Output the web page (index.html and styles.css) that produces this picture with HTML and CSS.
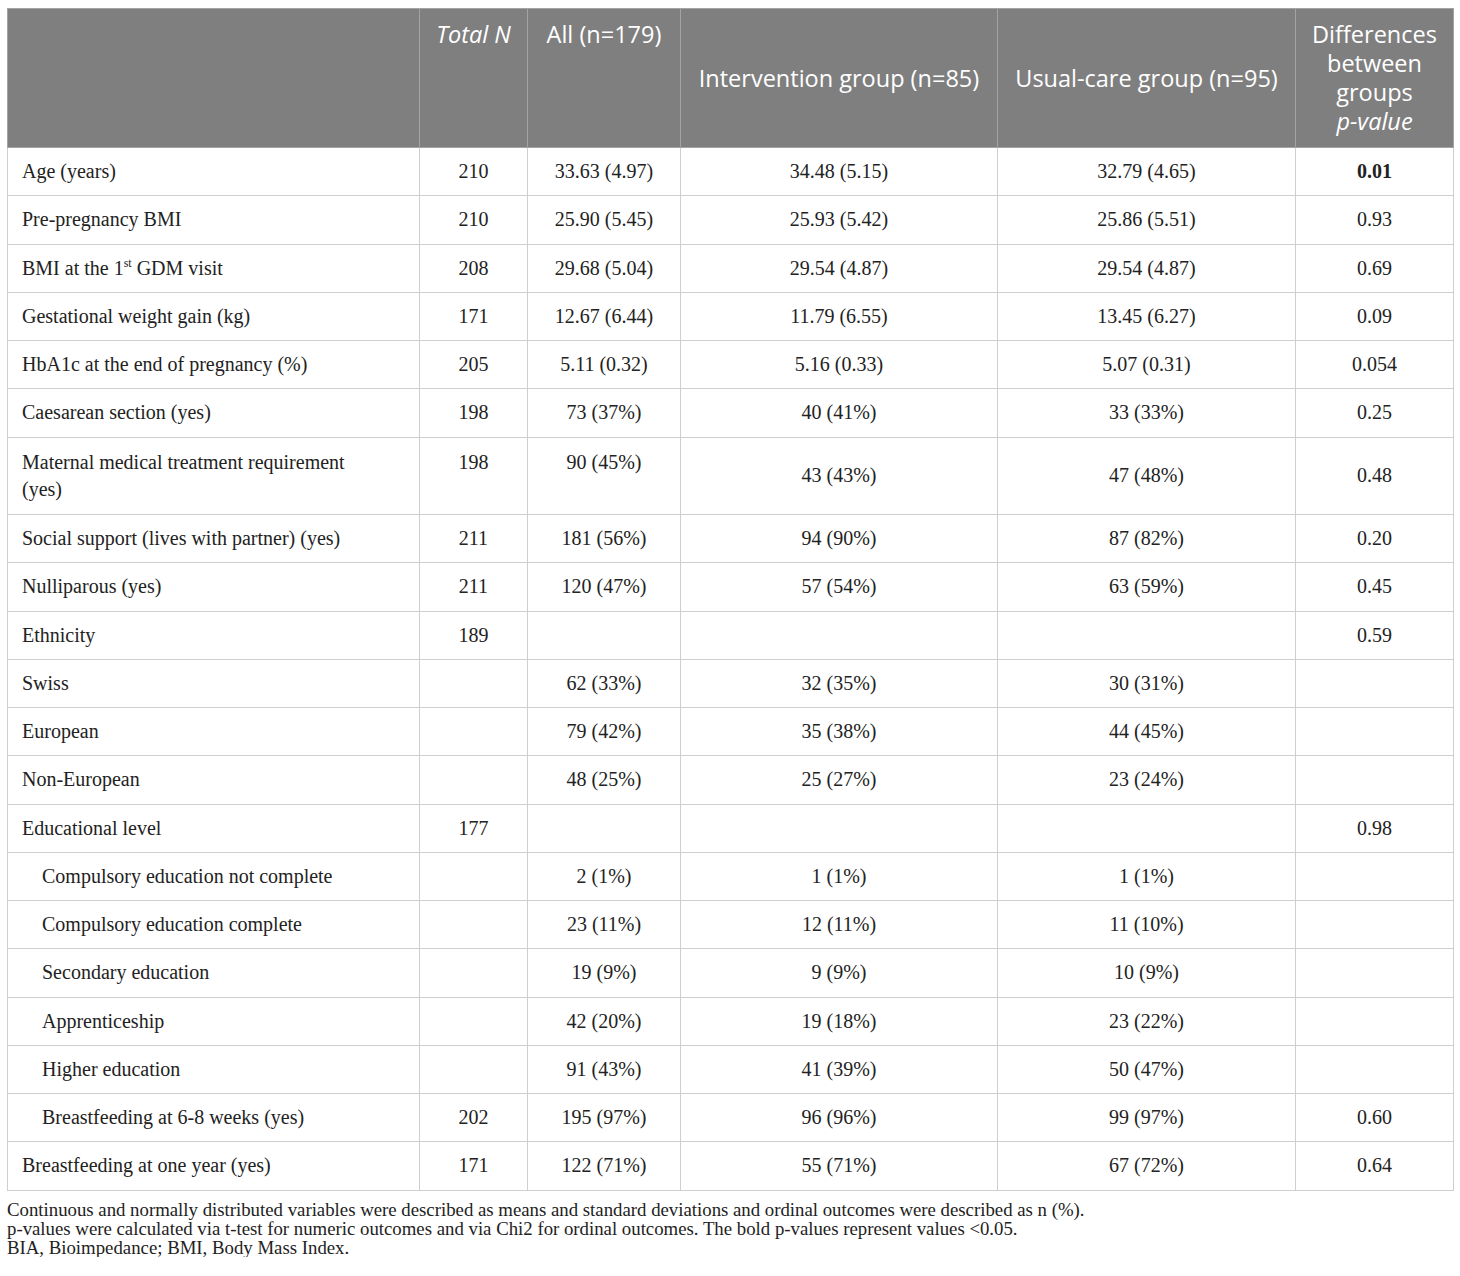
FILE: index.html
```html
<!DOCTYPE html>
<html lang="en">
<head>
<meta charset="utf-8">
<title>Table</title>
<link rel="stylesheet" href="styles.css">
</head>
<body>
<div class="wrap">
<table class="data">
  <colgroup>
    <col class="c1"><col class="c2"><col class="c3"><col class="c4"><col class="c5"><col class="c6">
  </colgroup>
  <thead>
    <tr>
      <th class="lab"></th>
      <th class="top"><em>Total N</em></th>
      <th class="top">All (n=179)</th>
      <th>Intervention group (n=85)</th>
      <th>Usual-care group (n=95)</th>
      <th>Differences between groups <em class="pv">p-value</em></th>
    </tr>
  </thead>
  <tbody>
    <tr><td class="lab">Age (years)</td><td class="top">210</td><td class="top">33.63 (4.97)</td><td>34.48 (5.15)</td><td>32.79 (4.65)</td><td><strong>0.01</strong></td></tr>
    <tr><td class="lab">Pre-pregnancy BMI</td><td class="top">210</td><td class="top">25.90 (5.45)</td><td>25.93 (5.42)</td><td>25.86 (5.51)</td><td>0.93</td></tr>
    <tr><td class="lab">BMI at the 1<sup>st</sup> GDM visit</td><td class="top">208</td><td class="top">29.68 (5.04)</td><td>29.54 (4.87)</td><td>29.54 (4.87)</td><td>0.69</td></tr>
    <tr><td class="lab">Gestational weight gain (kg)</td><td class="top">171</td><td class="top">12.67 (6.44)</td><td>11.79 (6.55)</td><td>13.45 (6.27)</td><td>0.09</td></tr>
    <tr><td class="lab">HbA1c at the end of pregnancy (%)</td><td class="top">205</td><td class="top">5.11 (0.32)</td><td>5.16 (0.33)</td><td>5.07 (0.31)</td><td>0.054</td></tr>
    <tr><td class="lab">Caesarean section (yes)</td><td class="top">198</td><td class="top">73 (37%)</td><td>40 (41%)</td><td>33 (33%)</td><td>0.25</td></tr>
    <tr class="tall"><td class="lab">Maternal medical treatment requirement<br>(yes)</td><td class="top">198</td><td class="top">90 (45%)</td><td>43 (43%)</td><td>47 (48%)</td><td>0.48</td></tr>
    <tr><td class="lab">Social support (lives with partner) (yes)</td><td class="top">211</td><td class="top">181 (56%)</td><td>94 (90%)</td><td>87 (82%)</td><td>0.20</td></tr>
    <tr><td class="lab">Nulliparous (yes)</td><td class="top">211</td><td class="top">120 (47%)</td><td>57 (54%)</td><td>63 (59%)</td><td>0.45</td></tr>
    <tr><td class="lab">Ethnicity</td><td class="top">189</td><td class="top"></td><td></td><td></td><td>0.59</td></tr>
    <tr><td class="lab">Swiss</td><td class="top"></td><td class="top">62 (33%)</td><td>32 (35%)</td><td>30 (31%)</td><td></td></tr>
    <tr><td class="lab">European</td><td class="top"></td><td class="top">79 (42%)</td><td>35 (38%)</td><td>44 (45%)</td><td></td></tr>
    <tr><td class="lab">Non-European</td><td class="top"></td><td class="top">48 (25%)</td><td>25 (27%)</td><td>23 (24%)</td><td></td></tr>
    <tr><td class="lab">Educational level</td><td class="top">177</td><td class="top"></td><td></td><td></td><td>0.98</td></tr>
    <tr><td class="lab ind">Compulsory education not complete</td><td class="top"></td><td class="top">2 (1%)</td><td>1 (1%)</td><td>1 (1%)</td><td></td></tr>
    <tr><td class="lab ind">Compulsory education complete</td><td class="top"></td><td class="top">23 (11%)</td><td>12 (11%)</td><td>11 (10%)</td><td></td></tr>
    <tr><td class="lab ind">Secondary education</td><td class="top"></td><td class="top">19 (9%)</td><td>9 (9%)</td><td>10 (9%)</td><td></td></tr>
    <tr><td class="lab ind">Apprenticeship</td><td class="top"></td><td class="top">42 (20%)</td><td>19 (18%)</td><td>23 (22%)</td><td></td></tr>
    <tr><td class="lab ind">Higher education</td><td class="top"></td><td class="top">91 (43%)</td><td>41 (39%)</td><td>50 (47%)</td><td></td></tr>
    <tr><td class="lab ind">Breastfeeding at 6-8 weeks (yes)</td><td class="top">202</td><td class="top">195 (97%)</td><td>96 (96%)</td><td>99 (97%)</td><td>0.60</td></tr>
    <tr><td class="lab">Breastfeeding at one year (yes)</td><td class="top">171</td><td class="top">122 (71%)</td><td>55 (71%)</td><td>67 (72%)</td><td>0.64</td></tr>
  </tbody>
</table>
<div class="notes">
  <p>Continuous and normally distributed variables were described as means and standard deviations and ordinal outcomes were described as n (%).</p>
  <p>p-values were calculated via t-test for numeric outcomes and via Chi2 for ordinal outcomes. The bold p-values represent values &lt;0.05.</p>
  <p>BIA, Bioimpedance; BMI, Body Mass Index.</p>
</div>
</div>
</body>
</html>
```

FILE: styles.css
```css
html, body {
  margin: 0;
  padding: 0;
  background: #ffffff;
}

body {
  font-family: "Liberation Serif", "DejaVu Serif", serif;
  color: #222222;
}

.wrap {
  padding: 8px 7px 0 7px;
}

.data {
  border-collapse: collapse;
  table-layout: fixed;
  width: 1446px;
  border: 1px solid #c8c8c8;
}

.c1 { width: 412px; }
.c2 { width: 108px; }
.c3 { width: 153px; }
.c4 { width: 317px; }
.c5 { width: 298px; }
.c6 { width: 158px; }

.data th {
  background: #7f7f7f;
  color: #ffffff;
  font-family: "Open Sans", "Noto Sans", sans-serif;
  font-weight: 400;
  font-size: 23.5px;
  line-height: 29px;
  padding: 11px 6px;
  border: 1px solid #a3a3a3;
  text-align: center;
  vertical-align: middle;
  height: 116px;
  box-sizing: content-box;
}

.data th em {
  font-style: italic;
}

.data th .pv {
  display: block;
}

.data td {
  font-size: 20px;
  line-height: 27.25px;
  padding: 10px 10px;
  border: 1px solid #cfcfcf;
  text-align: center;
  vertical-align: middle;
}

.data tr.tall td {
  padding-top: 11px;
  padding-bottom: 11px;
}

.data td.lab {
  text-align: left;
  padding-left: 14px;
}

.data td.ind {
  padding-left: 34px;
}

.data .top {
  vertical-align: top;
}

.data td strong {
  font-weight: 700;
}

.data sup {
  font-size: 12px;
  line-height: 0;
  vertical-align: 8px;
}

.notes {
  padding-top: 9px;
  font-size: 18.8px;
  line-height: 19px;
}

.notes p {
  margin: 0;
}
```
